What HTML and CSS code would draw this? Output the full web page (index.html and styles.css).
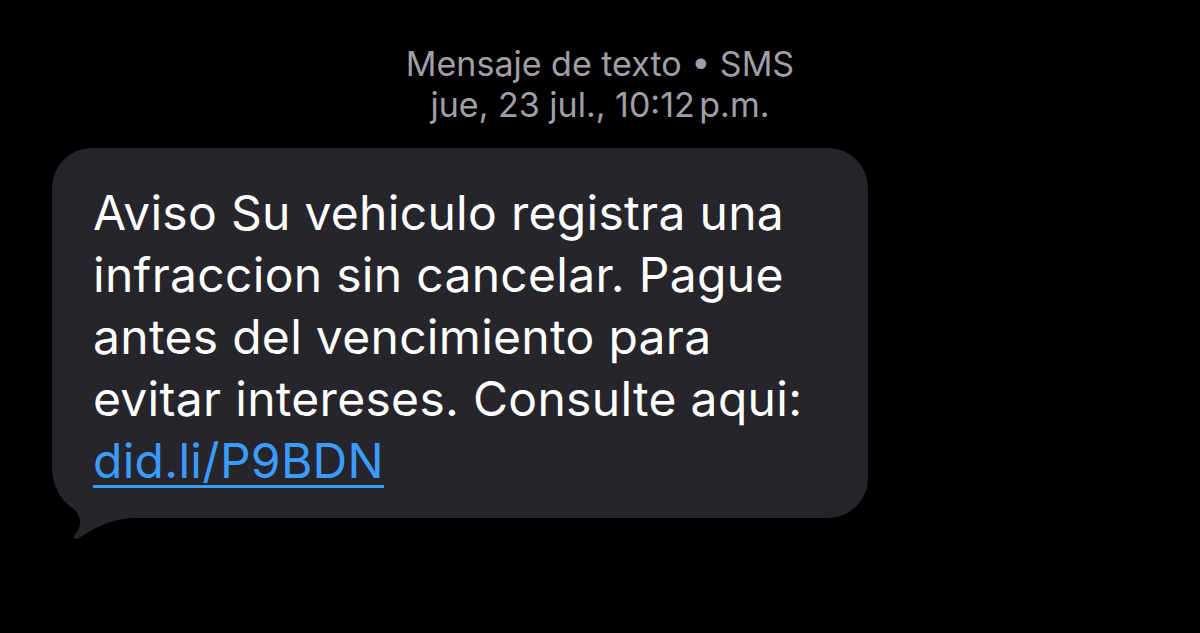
FILE: index.html
```html
<!DOCTYPE html>
<html lang="es">
<head>
  <meta charset="UTF-8" />
  <title>Mensaje de texto</title>
  <link rel="stylesheet" href="styles.css">
</head>
<body>
  <div class="thread">
    <div class="meta">
      <div class="meta-line">Mensaje de texto • SMS</div>
      <div class="meta-line">jue, 23 jul., 10:12<span class="thin"> </span>p.m.</div>
    </div>

    <!-- burbuja recibida -->
    <div class="bubble">
      <p class="bubble-text">Aviso Su vehiculo registra una infraccion sin cancelar. Pague antes del vencimiento para evitar intereses. Consulte aqui: <a href="#" class="link">did.li/P9BDN</a></p>
      <svg class="tail" width="90" height="62" viewBox="0 0 90 62">
        <path d="M2 0 C5 12 9 20 15 25 C22 30 28 36 28 44 C28 50 25 55 22 58 C20 60 23 62 27 60 C38 54 52 42 80 40 L90 40 L90 0 Z" fill="#26252b"/>
      </svg>
    </div>
  </div>
</body>
</html>
```

FILE: styles.css
```css
* {
  margin: 0;
  padding: 0;
  box-sizing: border-box;
}

body {
  background: #000000;
  width: 1200px;
  height: 633px;
  overflow: hidden;
  font-family: 'Inter', 'Liberation Sans', sans-serif;
}

.thread {
  padding-top: 43px;
}

.meta {
  text-align: center;
  color: #a09fa6;
  font-size: 34px;
  line-height: 41px;
}

.meta .thin {
  letter-spacing: -5px;
}

.bubble {
  position: relative;
  width: 816px;
  margin: 23px 0 0 52px;
  background: #26252b;
  border-radius: 40px;
  border-bottom-left-radius: 50px;
  padding: 34px 36px 26px 41px;
}

.bubble-text {
  position: relative;
  z-index: 1;
  color: #ffffff;
  font-size: 48px;
  line-height: 62px;
  letter-spacing: 0.3px;
}

.link {
  color: #3a9cff;
  text-decoration: underline;
  text-underline-offset: 7px;
  text-decoration-thickness: 3px;
}

.tail {
  position: absolute;
  left: 0;
  bottom: -22px;
}
```
